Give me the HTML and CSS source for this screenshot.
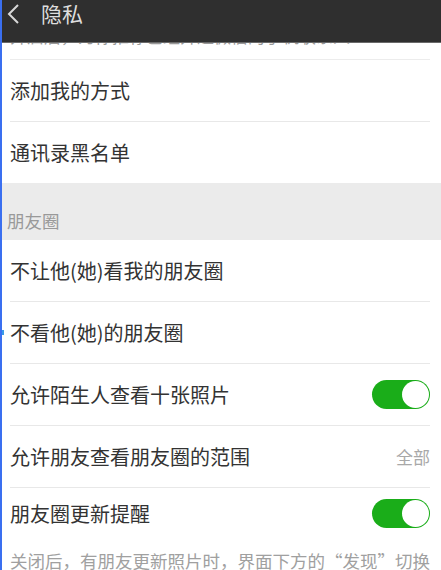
FILE: index.html
```html
<!DOCTYPE html>
<html lang="zh-CN">
<head>
<meta charset="utf-8">
<link rel="stylesheet" href="styles.css">
</head>
<body>
<div class="page">
  <header class="bar">
    <svg class="back" width="14" height="20" viewBox="0 0 14 20"><path d="M12 1 L3 10 L12 19" fill="none" stroke="#d8d8d8" stroke-width="2"/></svg>
    <span class="title">隐私</span>
  </header>
  <div class="clip"><div class="cliptext">开启后，为你推荐已经开通微信的手机联系人</div></div>
  <div class="row"><span>添加我的方式</span></div>
  <div class="row last"><span>通讯录黑名单</span></div>
  <div class="section"><span>朋友圈</span></div>
  <div class="row"><span>不让他(她)看我的朋友圈</span></div>
  <div class="row"><span>不看他(她)的朋友圈</span></div>
  <div class="row"><span>允许陌生人查看十张照片</span><span class="switch"><span class="knob"></span></span></div>
  <div class="row"><span>允许朋友查看朋友圈的范围</span><span class="value">全部</span></div>
  <div class="row last short"><span>朋友圈更新提醒</span><span class="switch"><span class="knob"></span></span></div>
  <div class="note">关闭后，有朋友更新照片时，界面下方的“发现”切换</div>
  <div class="tick"></div>
</div>
</body>
</html>
```
FILE: styles.css
```css
html, body { margin: 0; padding: 0; background: #fff; }
body { width: 441px; height: 570px; overflow: hidden; font-family: "Noto Sans CJK SC", "Noto Sans", sans-serif; }
.page { position: relative; height: 570px; border-left: 2px solid #3a6ff0; box-sizing: border-box; overflow: hidden; }
.bar { height: 43px; background: #2f2f2f; border-bottom: 1px solid #6a6a6a; display: flex; align-items: flex-start; padding-top: 0; box-sizing: border-box; }
.back { margin: 4px 0 0 4px; }
.title { color: #dedede; font-size: 21px; line-height: 26px; margin-left: 21px; }
.clip { height: 16px; margin: 0 11px 0 8px; border-bottom: 1px solid #ececec; overflow: hidden; }
.cliptext { font-size: 17px; line-height: 20px; color: #9a9a9a; margin-top: -17px; }
.row { height: 61px; margin: 0 11px 0 8px; border-bottom: 1px solid #e8e8e8; display: flex; align-items: center; justify-content: space-between; font-size: 20px; color: #333; }
.row.last { border-bottom: none; }
.row.short { height: 51px; }
.section { height: 57px; background: #ebebeb; display: flex; align-items: flex-end; padding: 0 0 9px 5px; box-sizing: border-box; font-size: 17.5px; line-height: 20px; color: #999; }
.value { font-size: 17px; color: #a8a8a8; }
.switch { width: 58px; height: 29px; border-radius: 15px; background: #1aad19; position: relative; box-sizing: border-box; }
.knob { position: absolute; right: 1.5px; top: 1px; width: 27px; height: 27px; border-radius: 50%; background: #fff; }
.note { margin: 11px 0 0 8px; font-size: 17.5px; line-height: 22px; color: #a0a0a0; white-space: nowrap; }
.tick { position: absolute; left: -2px; top: 330px; width: 4px; height: 5px; background: #3a9ae8; }
```
